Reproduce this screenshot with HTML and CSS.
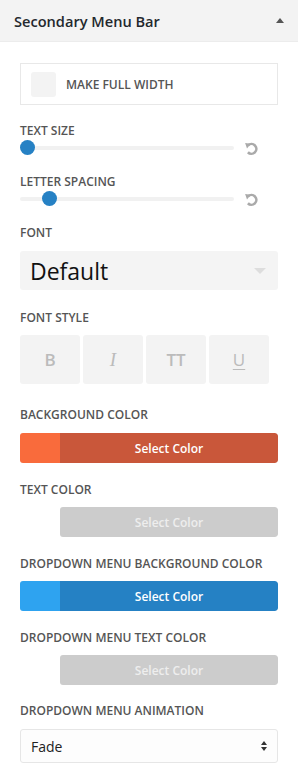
FILE: index.html
```html
<!DOCTYPE html>
<html lang="en">
<head>
    <meta charset="UTF-8">
    <meta name="viewport" content="width=device-width, initial-scale=1.0">
    <title>Secondary Menu Bar</title>
    <link rel="stylesheet" href="styles.css">
</head>
<body>
    <div class="header">
        <h3>Secondary Menu Bar</h3>
        <span class="toggle"></span>
    </div>
    <div class="panel">
        <div class="check-box">
            <span class="check"></span>
            <span class="check-label">Make Full Width</span>
        </div>

        <div class="label label-slider">Text Size</div>
        <div class="slider-row">
            <div class="track"><span class="thumb" style="left: 0px;"></span></div>
            <svg class="reset" viewBox="0 0 16 16" width="15" height="15">
                <path d="M4.4 4.6 A5.2 5.2 0 1 1 4.2 12" fill="none" stroke="#aaa" stroke-width="2.8"/>
                <path d="M1.2 2.2 L7.2 3 L3.2 8 Z" fill="#aaa"/>
            </svg>
        </div>

        <div class="label label-slider">Letter Spacing</div>
        <div class="slider-row">
            <div class="track"><span class="thumb" style="left: 22px;"></span></div>
            <svg class="reset" viewBox="0 0 16 16" width="15" height="15">
                <path d="M4.4 4.6 A5.2 5.2 0 1 1 4.2 12" fill="none" stroke="#aaa" stroke-width="2.8"/>
                <path d="M1.2 2.2 L7.2 3 L3.2 8 Z" fill="#aaa"/>
            </svg>
        </div>

        <div class="label label-select">Font</div>
        <div class="font-select">
            <span>Default</span>
            <span class="caret"></span>
        </div>

        <div class="label label-style">Font Style</div>
        <div class="styles">
            <span class="style-btn bold">B</span>
            <span class="style-btn italic">I</span>
            <span class="style-btn caps">TT</span>
            <span class="style-btn under">U</span>
        </div>

        <div class="label label-after-styles">Background Color</div>
        <div class="color-bar">
            <span class="swatch" style="background: #f96b3c;"></span>
            <span class="color-btn orange">Select Color</span>
        </div>

        <div class="label">Text Color</div>
        <div class="color-bar">
            <span class="swatch"></span>
            <span class="color-btn empty">Select Color</span>
        </div>

        <div class="label">Dropdown Menu Background Color</div>
        <div class="color-bar">
            <span class="swatch" style="background: #2ea3f0;"></span>
            <span class="color-btn blue">Select Color</span>
        </div>

        <div class="label">Dropdown Menu Text Color</div>
        <div class="color-bar">
            <span class="swatch"></span>
            <span class="color-btn empty">Select Color</span>
        </div>

        <div class="label label-select">Dropdown Menu Animation</div>
        <div class="anim-select">
            <span>Fade</span>
            <span class="updown">
                <span class="up"></span>
                <span class="down"></span>
            </span>
        </div>
    </div>
</body>
</html>
```

FILE: styles.css
```css
body {
    margin: 0;
    font-family: "Open Sans", "Liberation Sans", sans-serif;
    background-color: #ffffff;
    color: #555555;
}
.header {
    display: flex;
    align-items: center;
    justify-content: space-between;
    height: 42px;
    padding: 0 14px;
    background-color: #f3f3f3;
    border-bottom: 1px solid #ececec;
    box-sizing: border-box;
}
.header h3 {
    margin: 0;
    font-size: 14.6px;
    font-weight: 600;
    color: #23282d;
}
.toggle {
    width: 0;
    height: 0;
    border-left: 4px solid transparent;
    border-right: 4px solid transparent;
    border-bottom: 5px solid #555555;
}
.panel {
    padding: 21px 20px 20px;
}
.check-box {
    display: flex;
    align-items: center;
    height: 42px;
    padding: 0 10px;
    border: 1px solid #e8e8e8;
    box-sizing: border-box;
}
.check {
    width: 25px;
    height: 25px;
    border-radius: 3px;
    background-color: #f3f3f3;
}
.check-label {
    margin-left: 10px;
    font-size: 12px;
    font-weight: 600;
    text-transform: uppercase;
    color: #555555;
}
.label {
    margin-top: 19px;
    margin-bottom: 9px;
    font-size: 12px;
    line-height: 16px;
    font-weight: 600;
    text-transform: uppercase;
    color: #555555;
}
.label-slider {
    margin-top: 18px;
    margin-bottom: 1px;
}
.label-select {
    margin-top: 18px;
    margin-bottom: 10px;
}
.label-style {
    margin-top: 20px;
}
.label-after-styles {
    margin-top: 23px;
    margin-bottom: 10px;
}
.slider-row {
    display: flex;
    align-items: center;
    height: 16px;
}
.track {
    position: relative;
    width: 214px;
    height: 4px;
    background-color: #f1f1f1;
    border-radius: 2px;
}
.thumb {
    position: absolute;
    top: -6px;
    width: 15px;
    height: 15px;
    border-radius: 50%;
    background-color: #2681c4;
}
.reset {
    margin-left: 10px;
}
.font-select {
    display: flex;
    align-items: center;
    justify-content: space-between;
    height: 39px;
    padding: 0 12px 0 10px;
    background-color: #f4f4f4;
    border-radius: 3px;
    font-size: 23px;
    color: #111111;
}
.caret {
    width: 0;
    height: 0;
    border-left: 6px solid transparent;
    border-right: 6px solid transparent;
    border-top: 6px solid #dddddd;
}
.styles {
    display: flex;
    gap: 3px;
}
.style-btn {
    display: flex;
    align-items: center;
    justify-content: center;
    width: 60px;
    height: 49px;
    background-color: #f3f3f3;
    border-radius: 3px;
    font-size: 17px;
    font-weight: 600;
    color: #bbbbbb;
}
.italic {
    font-family: "Liberation Serif", serif;
    font-style: italic;
    font-weight: 400;
    font-size: 19px;
}
.under {
    text-decoration: underline;
    text-underline-offset: 3px;
    font-weight: 400;
}
.color-bar {
    display: flex;
    height: 30px;
    border-radius: 3px;
    overflow: hidden;
}
.swatch {
    width: 40px;
}
.color-btn {
    flex: 1;
    display: flex;
    align-items: center;
    justify-content: center;
    font-size: 12px;
    font-weight: 600;
    color: #ffffff;
    border-radius: 0 3px 3px 0;
}
.orange {
    background-color: #c9573a;
}
.blue {
    background-color: #2581c4;
}
.empty {
    background-color: #cccccc;
    color: #eeeeee;
    border-radius: 3px;
}
.anim-select {
    display: flex;
    align-items: center;
    justify-content: space-between;
    height: 34px;
    padding: 0 10px;
    border: 1px solid #e6e6e6;
    border-radius: 3px;
    background-color: #fdfdfd;
    box-sizing: border-box;
    font-size: 14px;
    color: #222222;
}
.updown {
    display: flex;
    flex-direction: column;
    gap: 2px;
}
.up {
    border-left: 3px solid transparent;
    border-right: 3px solid transparent;
    border-bottom: 4px solid #333333;
}
.down {
    border-left: 3px solid transparent;
    border-right: 3px solid transparent;
    border-top: 4px solid #333333;
}
```
